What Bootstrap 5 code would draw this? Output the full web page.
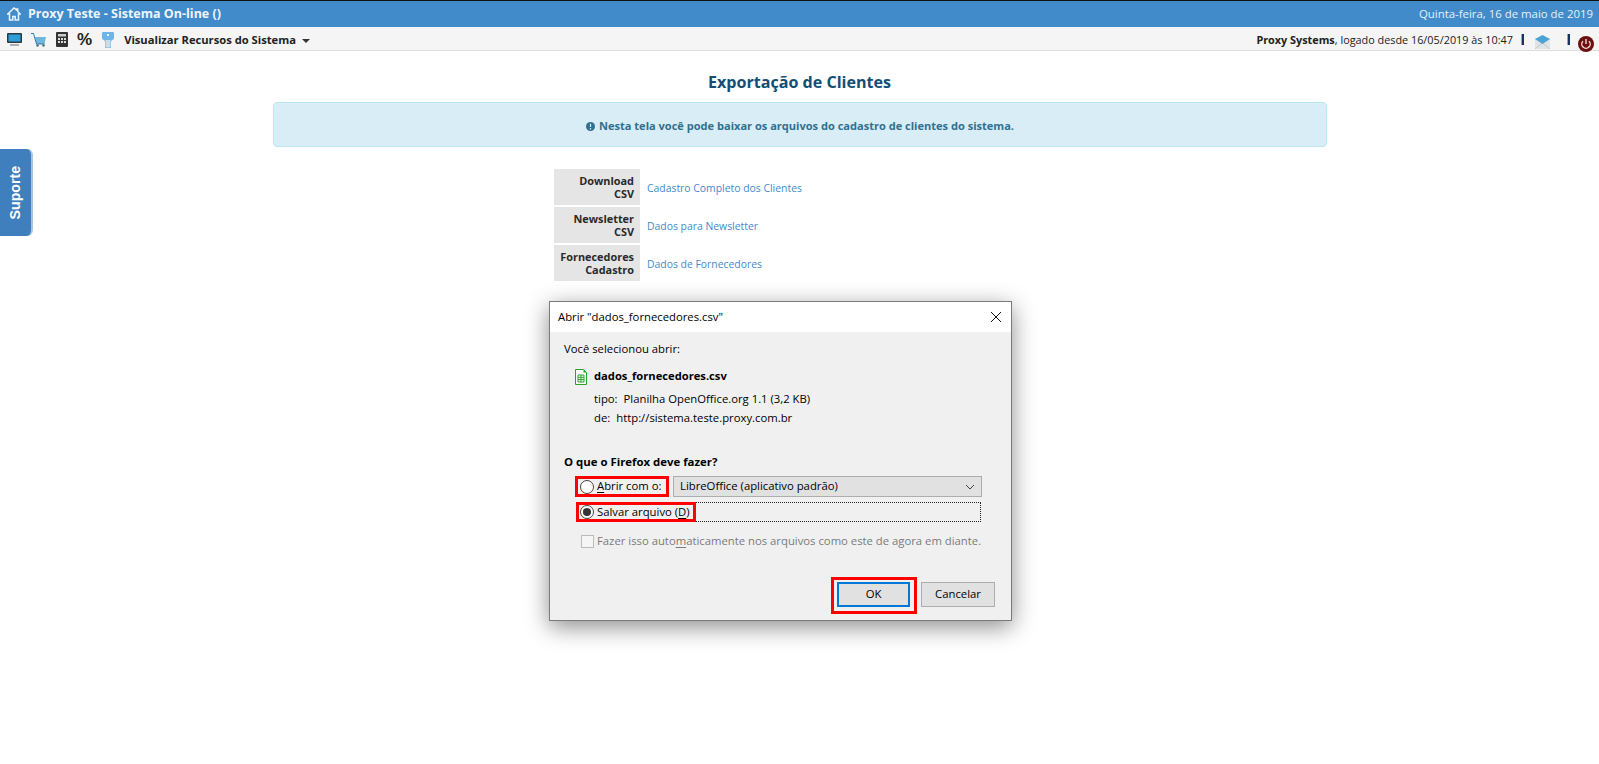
<!DOCTYPE html>
<html lang="pt-BR"><head><meta charset="utf-8"><title>Exportação de Clientes</title>
<link href="https://cdn.jsdelivr.net/npm/bootstrap@5.3.0/dist/css/bootstrap.min.css" rel="stylesheet">
<style>
html,body{height:100%;}
body{font-family:"Open Sans","Liberation Sans",sans-serif;font-size:12px;color:#222;background:#fff;overflow:hidden;position:relative;}
.top-strip{height:27px;background:#428bca;border-top:1px solid #111;color:#fff;padding:0 6px 0 7px;}
.top-title{font-size:12.5px;font-weight:700;margin-left:7px;color:#eef5fb;}
.top-date{font-size:11.4px;color:#e6f0f8;}
.tool-strip{height:24px;background:#f5f5f5;border-bottom:1px solid #ddd;padding:3px 5px 0 7px;}
.tool-strip svg{display:block;flex:none;}
.tool-gap{margin-right:9px;}
.pct-mark{font-family:"Liberation Sans",sans-serif;font-weight:700;font-size:17px;line-height:16px;color:#222;margin-right:10px;}
.res-menu{font-weight:700;font-size:11.2px;color:#222;margin-left:10px;}
.caret-mark{display:inline-block;border-top:4px solid #333;border-left:4px solid transparent;border-right:4px solid transparent;margin-left:6px;vertical-align:1px;}
.user-info{font-size:10.85px;color:#222;}
.pipe{display:block;width:3px;height:11px;background:linear-gradient(90deg,#e59a2f 0 33%,#14335f 33% 100%);flex:none;}
.mail-icon{margin:2px 0 -2px 11px;}
.power-icon{margin:3px 0 -5px 8px;}
.page-title{font-size:16.1px;font-weight:700;color:#144e75;text-align:center;margin:20px 0 0;line-height:22px;height:22px;}
.info-box{width:1054px;height:45px;margin:9px auto 0 273px;padding-top:3px;background:#d9edf7;border:1px solid #bce8f1;border-radius:4px;color:#31708f;font-weight:700;font-size:11.06px;}
.info-box svg{display:inline-block;vertical-align:-1px;margin-right:4px;}
.export-grid{margin:22px 0 0 554px;width:400px;}
.export-row{display:flex;height:36px;margin-bottom:2px;}
.export-head{width:86px;background:#e5e5e5;font-weight:700;font-size:10.9px;line-height:13px;text-align:right;padding:5px 6px 0 0;color:#2a2a2a;}
.export-link{margin:4px 0 0 7px;color:#428bca;font-size:10.4px;text-decoration:none;}
.side-tab{position:absolute;left:0;top:149px;width:33px;height:87px;background:#3f7fbd;border-right:2px solid #a8c6e0;border-radius:0 6px 6px 0;color:#fff;font-family:"Liberation Sans",sans-serif;font-weight:700;font-size:14.2px;}
.side-tab span{transform:rotate(-90deg);white-space:nowrap;}
.win-box{position:absolute;left:549px;top:301px;width:463px;height:320px;background:#f0f0f0;border:1px solid #7a7a7a;box-shadow:0 6px 22px rgba(0,0,0,.45);color:#000;font-size:11.3px;}
.win-head{height:30px;background:#fff;padding:0 8px;}
.win-x{width:14px;height:14px;}
.win-body{padding:7px 14px 0 14px;position:relative;height:288px;}
.win-line{height:19px;line-height:19px;white-space:nowrap;}
.file-row{margin:6px 0 0 11px;height:25px;}
.file-name{font-weight:700;margin-left:7px;font-size:11.2px;}
.meta-row{margin-left:30px;height:19px;line-height:19px;}
.meta-row span:first-child{margin-right:6px;}
.ask{font-weight:700;font-size:11.4px;margin-top:25px;height:19px;line-height:19px;}
.opt-row{display:flex;align-items:stretch;padding-left:11px;white-space:nowrap;}
.opt-one{height:21px;margin-top:5px;}
.opt-two{height:20px;margin-top:5px;}
.opt-three{height:24px;margin-top:7px;align-items:center;}
.round-mark{width:14px;height:14px;border-radius:50%;border:1px solid #444;background:#fff;flex:none;display:flex;align-items:center;justify-content:center;margin-right:3px;}
.round-mark.on::after{content:"";width:8px;height:8px;border-radius:50%;background:#333;}
.red-lab{border:3px solid #f00;display:flex;align-items:center;padding-left:2px;margin:0;}
.lab-a{width:94px;}
.lab-b{width:120px;margin-left:1px;padding-left:1px;}
.win-select{margin-left:4px;width:309px;background:#e1e1e1;border:1px solid #adadad;padding:0 6px;}
.dot-box{width:285px;border:1px dotted #222;border-left:0;}
.check-box{width:13px;height:13px;border:1px solid #bbb;background:#f5f5f5;margin:0 3px 0 6px;flex:none;}
.muted-line{color:#7b7b7b;font-size:11.3px;}
.win-btn{height:25px;border:1px solid #adadad;background:#e1e1e1;font-size:11.3px;color:#000;padding:0;border-radius:0;display:block;}
.btn-ok{width:73px;border:2px solid #0078d7;}
.btn-cancel{width:74px;margin-top:5px;}
.red-ok{display:block;border:3px solid #f00;padding:2px 4px 4px 3px;}
.win-foot{position:absolute;right:16px;top:245px;}
u{text-underline-offset:2px;}
</style></head><body>
<header class="top-strip d-flex align-items-center justify-content-between">
<div class="d-flex align-items-center">
<svg width="14" height="14" viewBox="0 0 14 14" aria-hidden="true"><path d="M7 1 .8 7h1.700v6h3.300V9.500h2.400V13h3.300V7h1.700l-2.500-2.500V2H9.500v.9z" fill="none" stroke="#eaf2f9" stroke-width="1.500"/></svg>
<span class="top-title">Proxy Teste - Sistema On-line ()</span></div>
<span class="top-date">Quinta-feira, 16 de maio de 2019</span>
</header>
<nav class="tool-strip d-flex align-items-center justify-content-between">
<div class="d-flex align-items-center">
<svg class="tool-gap" width="15" height="15" viewBox="0 0 15 15"><rect y="1" width="15" height="10" rx="1" fill="#2b3a42"/><rect x="1.500" y="2.500" width="12" height="7" fill="#2f9ed8"/><rect x="3" y="12" width="9" height="2" fill="#a9b0b3"/></svg>
<svg class="tool-gap" width="16" height="15" viewBox="0 0 16 15"><path d="M4 5h11l-1.500 7H5.500z" fill="#6fb7dc"/><path d="M0 1.500h2.500L5.500 12h8" fill="none" stroke="#2c7aa8"/><circle cx="6.500" cy="13.500" r="1.200" fill="#4a6a7c"/><circle cx="12.500" cy="13.500" r="1.200" fill="#4a6a7c"/></svg>
<svg class="tool-gap" width="12" height="15" viewBox="0 0 12 15"><rect width="12" height="15" rx="1" fill="#333"/><rect x="2" y="2" width="8" height="2.500" fill="#ccc"/><path d="M2 6h2v2H2zM5 6h2v2H5zM8 6h2v2H8zM2 9h2v2H2zM5 9h2v2H5zM8 9h2v2H8z" fill="#ddd"/></svg>
<span class="pct-mark">%</span>
<svg width="12" height="16" viewBox="0 0 12 16"><path d="M0 1q0-1 1-1h10q1 0 1 1v6q-3 1-3 3v6H3v-6q0-2-3-3z" fill="#6db5e8"/><rect x="3.500" y="8" width="5" height="7.500" fill="#cfdbe3"/><rect x="5" y="2" width="2" height="2" fill="#e9f4fb"/></svg>
<span class="res-menu">Visualizar Recursos do Sistema<i class="caret-mark"></i></span>
</div>
<div class="d-flex align-items-center">
<span class="user-info"><b>Proxy Systems</b>, logado desde 16/05/2019 às 10:47</span>
<i class="pipe ms-2"></i>
<svg class="mail-icon" width="15" height="15" viewBox="0 0 15 15"><rect y="4" width="15" height="11" fill="#dfe4e7"/><path d="M0 15 7.500 9 15 15" fill="none" stroke="#c4cacd"/><path d="M0 5l7.500-4L15 5 7.500 10z" fill="#4ba3d6"/></svg>
<i class="pipe" style="margin-left:17px"></i>
<svg class="power-icon" width="16" height="16" viewBox="0 0 16 16"><circle cx="8" cy="8" r="8" fill="#6e1010"/><path d="M5 5.200a4.200 4.200 0 1 0 6 0" fill="none" stroke="#f2dddd" stroke-width="1.400"/><path d="M8 3v5" stroke="#f2dddd" stroke-width="1.400"/></svg>
</div>
</nav>
<h1 class="page-title">Exportação de Clientes</h1>
<div class="info-box d-flex align-items-center justify-content-center"><span><svg width="9" height="9" viewBox="0 0 9 9"><circle cx="4.500" cy="4.500" r="4.500" fill="#31708f"/><path d="M4.500 1.800v3.200M4.500 6v1.400" stroke="#d9edf7" stroke-width="1.200"/></svg>Nesta tela você pode baixar os arquivos do cadastro de clientes do sistema.</span></div>
<section class="export-grid">
<div class="export-row"><div class="export-head">Download<br>CSV</div><a class="export-link align-self-center" href="#">Cadastro Completo dos Clientes</a></div>
<div class="export-row"><div class="export-head">Newsletter<br>CSV</div><a class="export-link align-self-center" href="#">Dados para Newsletter</a></div>
<div class="export-row"><div class="export-head">Fornecedores<br>Cadastro</div><a class="export-link align-self-center" href="#">Dados de Fornecedores</a></div>
</section>
<aside class="side-tab d-flex align-items-center justify-content-center"><span>Suporte</span></aside>
<div class="win-box" role="dialog">
<div class="win-head d-flex align-items-center justify-content-between"><span>Abrir "dados_fornecedores.csv"</span>
<svg class="win-x" viewBox="0 0 14 14"><path d="M2 2l10 10M12 2 2 12" stroke="#111" stroke-width="1"/></svg></div>
<div class="win-body">
<div class="win-line">Você selecionou abrir:</div>
<div class="file-row d-flex align-items-center">
<svg width="12" height="16" viewBox="0 0 12 16"><path d="M.5.500h8l3 3v12H.5z" fill="#fff" stroke="#27a327"/><path d="M8.500.5l3 3h-3z" fill="#27a327"/><path d="M3 6h6v7H3zM3 8.300h6M3 10.600h6M6 6v7" fill="none" stroke="#27a327"/></svg>
<span class="file-name">dados_fornecedores.csv</span></div>
<div class="meta-row"><span>tipo:</span><span>Planilha OpenOffice.org 1.1 (3,2 KB)</span></div>
<div class="meta-row"><span>de:</span><span>http://sistema.teste.proxy.com.br</span></div>
<div class="ask">O que o Firefox deve fazer?</div>
<div class="opt-row opt-one"><label class="red-lab lab-a"><i class="round-mark"></i><span><u>A</u>brir com o:</span></label>
<div class="win-select d-flex align-items-center justify-content-between"><span>LibreOffice (aplicativo padrão)</span><svg width="10" height="6" viewBox="0 0 10 6"><path d="M1 1l4 4 4-4" fill="none" stroke="#444"/></svg></div></div>
<div class="opt-row opt-two"><label class="red-lab lab-b"><i class="round-mark on"></i><span>Salvar arquivo (<u>D</u>)</span></label><div class="dot-box"></div></div>
<div class="opt-row opt-three muted-line"><i class="check-box"></i><span>Fazer isso auto<u>m</u>aticamente nos arquivos como este de agora em diante.</span></div>
<div class="win-foot d-flex align-items-start gap-1"><span class="red-ok"><button class="win-btn btn-ok" type="button">OK</button></span><button class="win-btn btn-cancel" type="button">Cancelar</button></div>
</div></div>
<script src="https://cdn.jsdelivr.net/npm/bootstrap@5.3.0/dist/js/bootstrap.bundle.min.js"></script>
</body></html>
